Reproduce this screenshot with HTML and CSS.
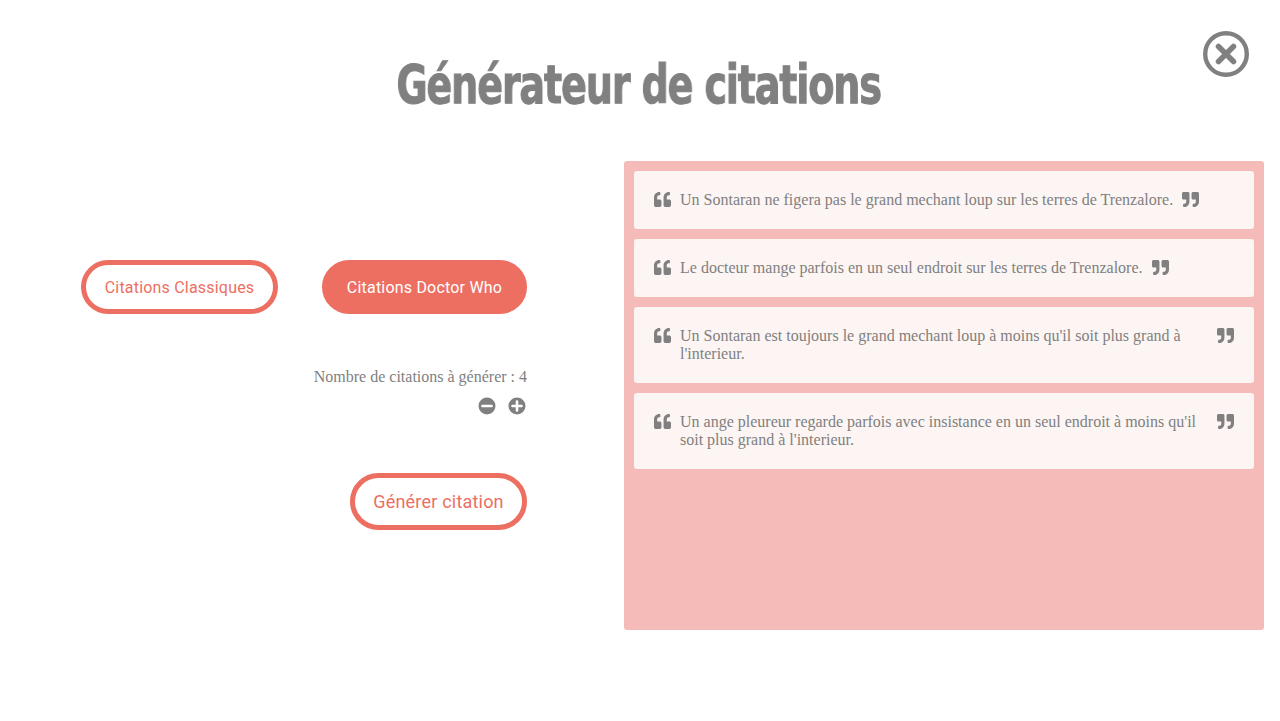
FILE: index.html
```html
<!DOCTYPE html>
<html lang="fr">
<head>
  <meta charset="UTF-8">
  <meta name="viewport" content="width=device-width, initial-scale=1.0">
  <title>Générateur de citations</title>
  <link rel="stylesheet" href="styles.css">
</head>
<body>

<a class="close" href="#" aria-label="Fermer">
  <svg viewBox="0 0 46 46" width="46" height="46">
    <circle cx="23" cy="23" r="20.8" fill="none" stroke="#808080" stroke-width="4.4"/>
    <path d="M15.5 15.5L30.5 30.5M30.5 15.5L15.5 30.5" fill="none" stroke="#808080" stroke-width="5.5" stroke-linecap="round"/>
  </svg>
</a>

<div class="head">
  <h1 class="title">Générateur de citations</h1>
</div>

<div class="main">
  <div class="controls">
    <div class="types">
      <button class="btn">Citations Classiques</button>
      <button class="btn btn-on">Citations Doctor Who</button>
    </div>

    <p class="count">Nombre de citations à générer : 4</p>
    <div class="steppers">
      <svg viewBox="0 0 18 18" width="18" height="18">
        <circle cx="9" cy="9" r="8.5" fill="#808080"/>
        <path d="M4.5 9H13.5" stroke="#fff" stroke-width="2.6" stroke-linecap="round"/>
      </svg>
      <svg viewBox="0 0 18 18" width="18" height="18">
        <circle cx="9" cy="9" r="8.5" fill="#808080"/>
        <path d="M4.5 9H13.5M9 4.5V13.5" stroke="#fff" stroke-width="2.6" stroke-linecap="round"/>
      </svg>
    </div>

    <button class="btn btn-big">Générer citation</button>
  </div>

  <div class="panel">
    <div class="quote">
      <svg class="qicon" viewBox="0 0 512 512"><path d="M464 256h-80v-64c0-35.3 28.7-64 64-64h8c13.3 0 24-10.7 24-24V56c0-13.3-10.7-24-24-24h-8c-88.4 0-160 71.6-160 160v240c0 26.5 21.5 48 48 48h128c26.5 0 48-21.5 48-48V304c0-26.5-21.5-48-48-48zm-288 0H96v-64c0-35.3 28.7-64 64-64h8c13.3 0 24-10.7 24-24V56c0-13.3-10.7-24-24-24h-8C71.6 32 0 103.6 0 192v240c0 26.5 21.5 48 48 48h128c26.5 0 48-21.5 48-48V304c0-26.5-21.5-48-48-48z"/></svg>
      <p>Un Sontaran ne figera pas le grand mechant loup sur les terres de Trenzalore.</p>
      <svg class="qicon" viewBox="0 0 512 512"><path d="M464 32H336c-26.5 0-48 21.5-48 48v128c0 26.5 21.5 48 48 48h80v64c0 35.3-28.7 64-64 64h-8c-13.3 0-24 10.7-24 24v48c0 13.3 10.7 24 24 24h8c88.4 0 160-71.6 160-160V80c0-26.5-21.5-48-48-48zm-288 0H48C21.5 32 0 53.5 0 80v128c0 26.5 21.5 48 48 48h80v64c0 35.3-28.7 64-64 64h-8c-13.3 0-24 10.7-24 24v48c0 13.3 10.7 24 24 24h8c88.4 0 160-71.6 160-160V80c0-26.5-21.5-48-48-48z"/></svg>
    </div>
    <div class="quote">
      <svg class="qicon" viewBox="0 0 512 512"><path d="M464 256h-80v-64c0-35.3 28.7-64 64-64h8c13.3 0 24-10.7 24-24V56c0-13.3-10.7-24-24-24h-8c-88.4 0-160 71.6-160 160v240c0 26.5 21.5 48 48 48h128c26.5 0 48-21.5 48-48V304c0-26.5-21.5-48-48-48zm-288 0H96v-64c0-35.3 28.7-64 64-64h8c13.3 0 24-10.7 24-24V56c0-13.3-10.7-24-24-24h-8C71.6 32 0 103.6 0 192v240c0 26.5 21.5 48 48 48h128c26.5 0 48-21.5 48-48V304c0-26.5-21.5-48-48-48z"/></svg>
      <p>Le docteur mange parfois en un seul endroit sur les terres de Trenzalore.</p>
      <svg class="qicon" viewBox="0 0 512 512"><path d="M464 32H336c-26.5 0-48 21.5-48 48v128c0 26.5 21.5 48 48 48h80v64c0 35.3-28.7 64-64 64h-8c-13.3 0-24 10.7-24 24v48c0 13.3 10.7 24 24 24h8c88.4 0 160-71.6 160-160V80c0-26.5-21.5-48-48-48zm-288 0H48C21.5 32 0 53.5 0 80v128c0 26.5 21.5 48 48 48h80v64c0 35.3-28.7 64-64 64h-8c-13.3 0-24 10.7-24 24v48c0 13.3 10.7 24 24 24h8c88.4 0 160-71.6 160-160V80c0-26.5-21.5-48-48-48z"/></svg>
    </div>
    <div class="quote">
      <svg class="qicon" viewBox="0 0 512 512"><path d="M464 256h-80v-64c0-35.3 28.7-64 64-64h8c13.3 0 24-10.7 24-24V56c0-13.3-10.7-24-24-24h-8c-88.4 0-160 71.6-160 160v240c0 26.5 21.5 48 48 48h128c26.5 0 48-21.5 48-48V304c0-26.5-21.5-48-48-48zm-288 0H96v-64c0-35.3 28.7-64 64-64h8c13.3 0 24-10.7 24-24V56c0-13.3-10.7-24-24-24h-8C71.6 32 0 103.6 0 192v240c0 26.5 21.5 48 48 48h128c26.5 0 48-21.5 48-48V304c0-26.5-21.5-48-48-48z"/></svg>
      <p>Un Sontaran est toujours le grand mechant loup à moins qu'il soit plus grand à l'interieur.</p>
      <svg class="qicon" viewBox="0 0 512 512"><path d="M464 32H336c-26.5 0-48 21.5-48 48v128c0 26.5 21.5 48 48 48h80v64c0 35.3-28.7 64-64 64h-8c-13.3 0-24 10.7-24 24v48c0 13.3 10.7 24 24 24h8c88.4 0 160-71.6 160-160V80c0-26.5-21.5-48-48-48zm-288 0H48C21.5 32 0 53.5 0 80v128c0 26.5 21.5 48 48 48h80v64c0 35.3-28.7 64-64 64h-8c-13.3 0-24 10.7-24 24v48c0 13.3 10.7 24 24 24h8c88.4 0 160-71.6 160-160V80c0-26.5-21.5-48-48-48z"/></svg>
    </div>
    <div class="quote">
      <svg class="qicon" viewBox="0 0 512 512"><path d="M464 256h-80v-64c0-35.3 28.7-64 64-64h8c13.3 0 24-10.7 24-24V56c0-13.3-10.7-24-24-24h-8c-88.4 0-160 71.6-160 160v240c0 26.5 21.5 48 48 48h128c26.5 0 48-21.5 48-48V304c0-26.5-21.5-48-48-48zm-288 0H96v-64c0-35.3 28.7-64 64-64h8c13.3 0 24-10.7 24-24V56c0-13.3-10.7-24-24-24h-8C71.6 32 0 103.6 0 192v240c0 26.5 21.5 48 48 48h128c26.5 0 48-21.5 48-48V304c0-26.5-21.5-48-48-48z"/></svg>
      <p>Un ange pleureur regarde parfois avec insistance en un seul endroit à moins qu'il soit plus grand à l'interieur.</p>
      <svg class="qicon" viewBox="0 0 512 512"><path d="M464 32H336c-26.5 0-48 21.5-48 48v128c0 26.5 21.5 48 48 48h80v64c0 35.3-28.7 64-64 64h-8c-13.3 0-24 10.7-24 24v48c0 13.3 10.7 24 24 24h8c88.4 0 160-71.6 160-160V80c0-26.5-21.5-48-48-48zm-288 0H48C21.5 32 0 53.5 0 80v128c0 26.5 21.5 48 48 48h80v64c0 35.3-28.7 64-64 64h-8c-13.3 0-24 10.7-24 24v48c0 13.3 10.7 24 24 24h8c88.4 0 160-71.6 160-160V80c0-26.5-21.5-48-48-48z"/></svg>
    </div>
  </div>
</div>

</body>
</html>
```

FILE: styles.css
```css
* { margin:0; padding:0; box-sizing:border-box; }

body { background:#fff; color:#808080; font-family:"Liberation Serif", serif; font-size:16px; line-height:18px; }

.close { position:absolute; top:31px; left:1203px; display:block; width:46px; height:46px; }
.close svg { display:block; }

.head { height:161px; padding:49px 2px 0 0; text-align:center; }

/* the reference face is a narrow rounded display font, so a wide bold is squeezed */
.title { display:inline-block; transform:scaleX(.785); will-change:transform; font-family:"DejaVu Sans Condensed", "DejaVu Sans", sans-serif; font-weight:700; font-size:54px; line-height:72px; letter-spacing:-1.5px; -webkit-text-stroke:1px #808080; white-space:nowrap; }

.main { display:flex; padding-right:16px; }

.controls { width:624px; flex:none; display:flex; flex-direction:column; align-items:flex-end; padding:99px 97px 0 81px; }

.types { width:100%; display:flex; justify-content:space-between; }

.btn { height:54px; padding:0; border:5px solid #ec6f62; border-radius:27px; background:#fff; color:#ec6f62; font-family:Roboto, sans-serif; font-size:16px; font-weight:400; letter-spacing:.2px; white-space:nowrap; }
.types .btn:first-child { width:197px; }
.types .btn:last-child { width:205px; }
.btn-on { background:#ec6f62; color:#fff; }
.btn-big { margin-top:57px; width:177px; height:57px; border-radius:29px; font-size:18px; }

.count { margin-top:54px; height:18px; }

.steppers { margin-top:11px; padding-right:1px; height:18px; display:flex; gap:12px; margin-bottom:1px; }
.steppers svg { display:block; }

.panel { flex:1; height:469px; padding:10px; display:flex; flex-direction:column; gap:10px; background:#f4bbb8; border-radius:3px; }

.quote { display:flex; align-items:flex-start; padding:20px; background:#fdf5f3; border-radius:3px; }
.quote p { margin:0 9px; }

.qicon { flex:none; width:17px; height:17px; fill:#808080; }
```
